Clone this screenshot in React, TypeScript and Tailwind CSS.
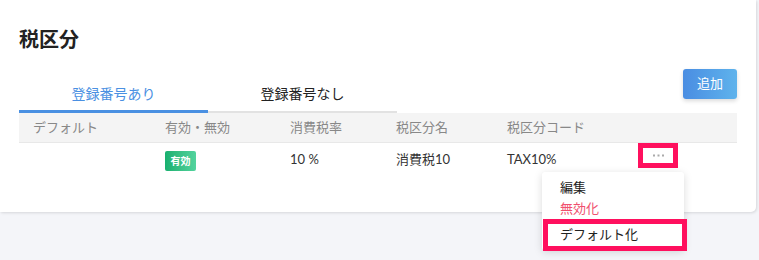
import React from "react";

const font = { fontFamily: '"Lato", "Noto Sans CJK JP", sans-serif' };

export default function App() {
  return (
    <div className="relative w-[759px] h-[260px] bg-[#f4f5f9] overflow-hidden" style={font}>
      <div className="w-[756px] h-[212px] bg-white rounded-br-[5px] shadow-[1px_1px_3px_rgba(0,0,0,0.12)] px-[19px]">
        <div className="pt-[27px] text-[20px] leading-[24px] font-bold text-[#222]">税区分</div>
        <div className="flex justify-between items-end mt-[18px]">
          <div className="flex">
            <div className="w-[189px] h-[37px] flex items-center justify-center border-b-[3px] border-[#4a90e2] text-[14px] text-[#4a90e2]">
              登録番号あり
            </div>
            <div className="w-[189px] h-[37px] flex items-center justify-center border-b-2 border-[#e2e2e2] pb-[1px] text-[14px] text-[#222]">
              登録番号なし
            </div>
          </div>
          <button className="mb-[14px] w-[54px] h-[30px] rounded-[3px] bg-gradient-to-r from-[#4a8de2] to-[#5fb3ec] text-white text-[13px] shadow-[0_2px_4px_rgba(0,0,0,0.15)]">
            追加
          </button>
        </div>
        <div className="grid grid-cols-[146px_125px_106px_111px_131px_1fr] h-[30px] items-center bg-[#f4f4f4] border-b border-[#e8e8e8] text-[13px] text-[#888]">
          <div className="pl-[14px]">デフォルト</div>
          <div>有効・無効</div>
          <div>消費税率</div>
          <div>税区分名</div>
          <div>税区分コード</div>
          <div></div>
        </div>
        <div className="grid grid-cols-[146px_125px_106px_111px_131px_1fr] h-[36px] items-center text-[13px] text-[#333]">
          <div></div>
          <div>
            <span className="inline-flex items-center justify-center w-[31px] h-[20px] rounded-[2px] bg-gradient-to-r from-[#17b06f] to-[#52d39d] text-white text-[10px] font-bold">
              有効
            </span>
          </div>
          <div className="-mt-[3px]">10 %</div>
          <div className="-mt-[3px]">消費税10</div>
          <div className="-mt-[3px]">TAX10%</div>
          <div className="self-start">
            <div className="w-[40px] h-[25px] border-[5px] border-[#ff105e] bg-white flex items-center justify-center">
              <svg width="11" height="3" viewBox="0 0 11 3">
                <rect x="0" y="0.5" width="2" height="2" fill="#aaa" />
                <rect x="4.5" y="0.5" width="2" height="2" fill="#aaa" />
                <rect x="9" y="0.5" width="2" height="2" fill="#aaa" />
              </svg>
            </div>
          </div>
        </div>
      </div>
      <div className="absolute left-[542px] top-[172px] w-[142px] h-[78px] bg-white rounded-[3px] shadow-[0_2px_8px_rgba(0,0,0,0.15)] pt-[5px] text-[13px]">
        <div className="h-[21px] leading-[21px] pl-[18px] text-[#222]">編集</div>
        <div className="h-[21px] leading-[21px] pl-[18px] text-[#f0506e]">無効化</div>
        <div className="w-[144px] ml-[1px] h-[32px] border-[5px] border-[#ff105e] bg-white flex items-center pl-[12px] text-[#222]">
          デフォルト化
        </div>
      </div>
    </div>
  );
}
